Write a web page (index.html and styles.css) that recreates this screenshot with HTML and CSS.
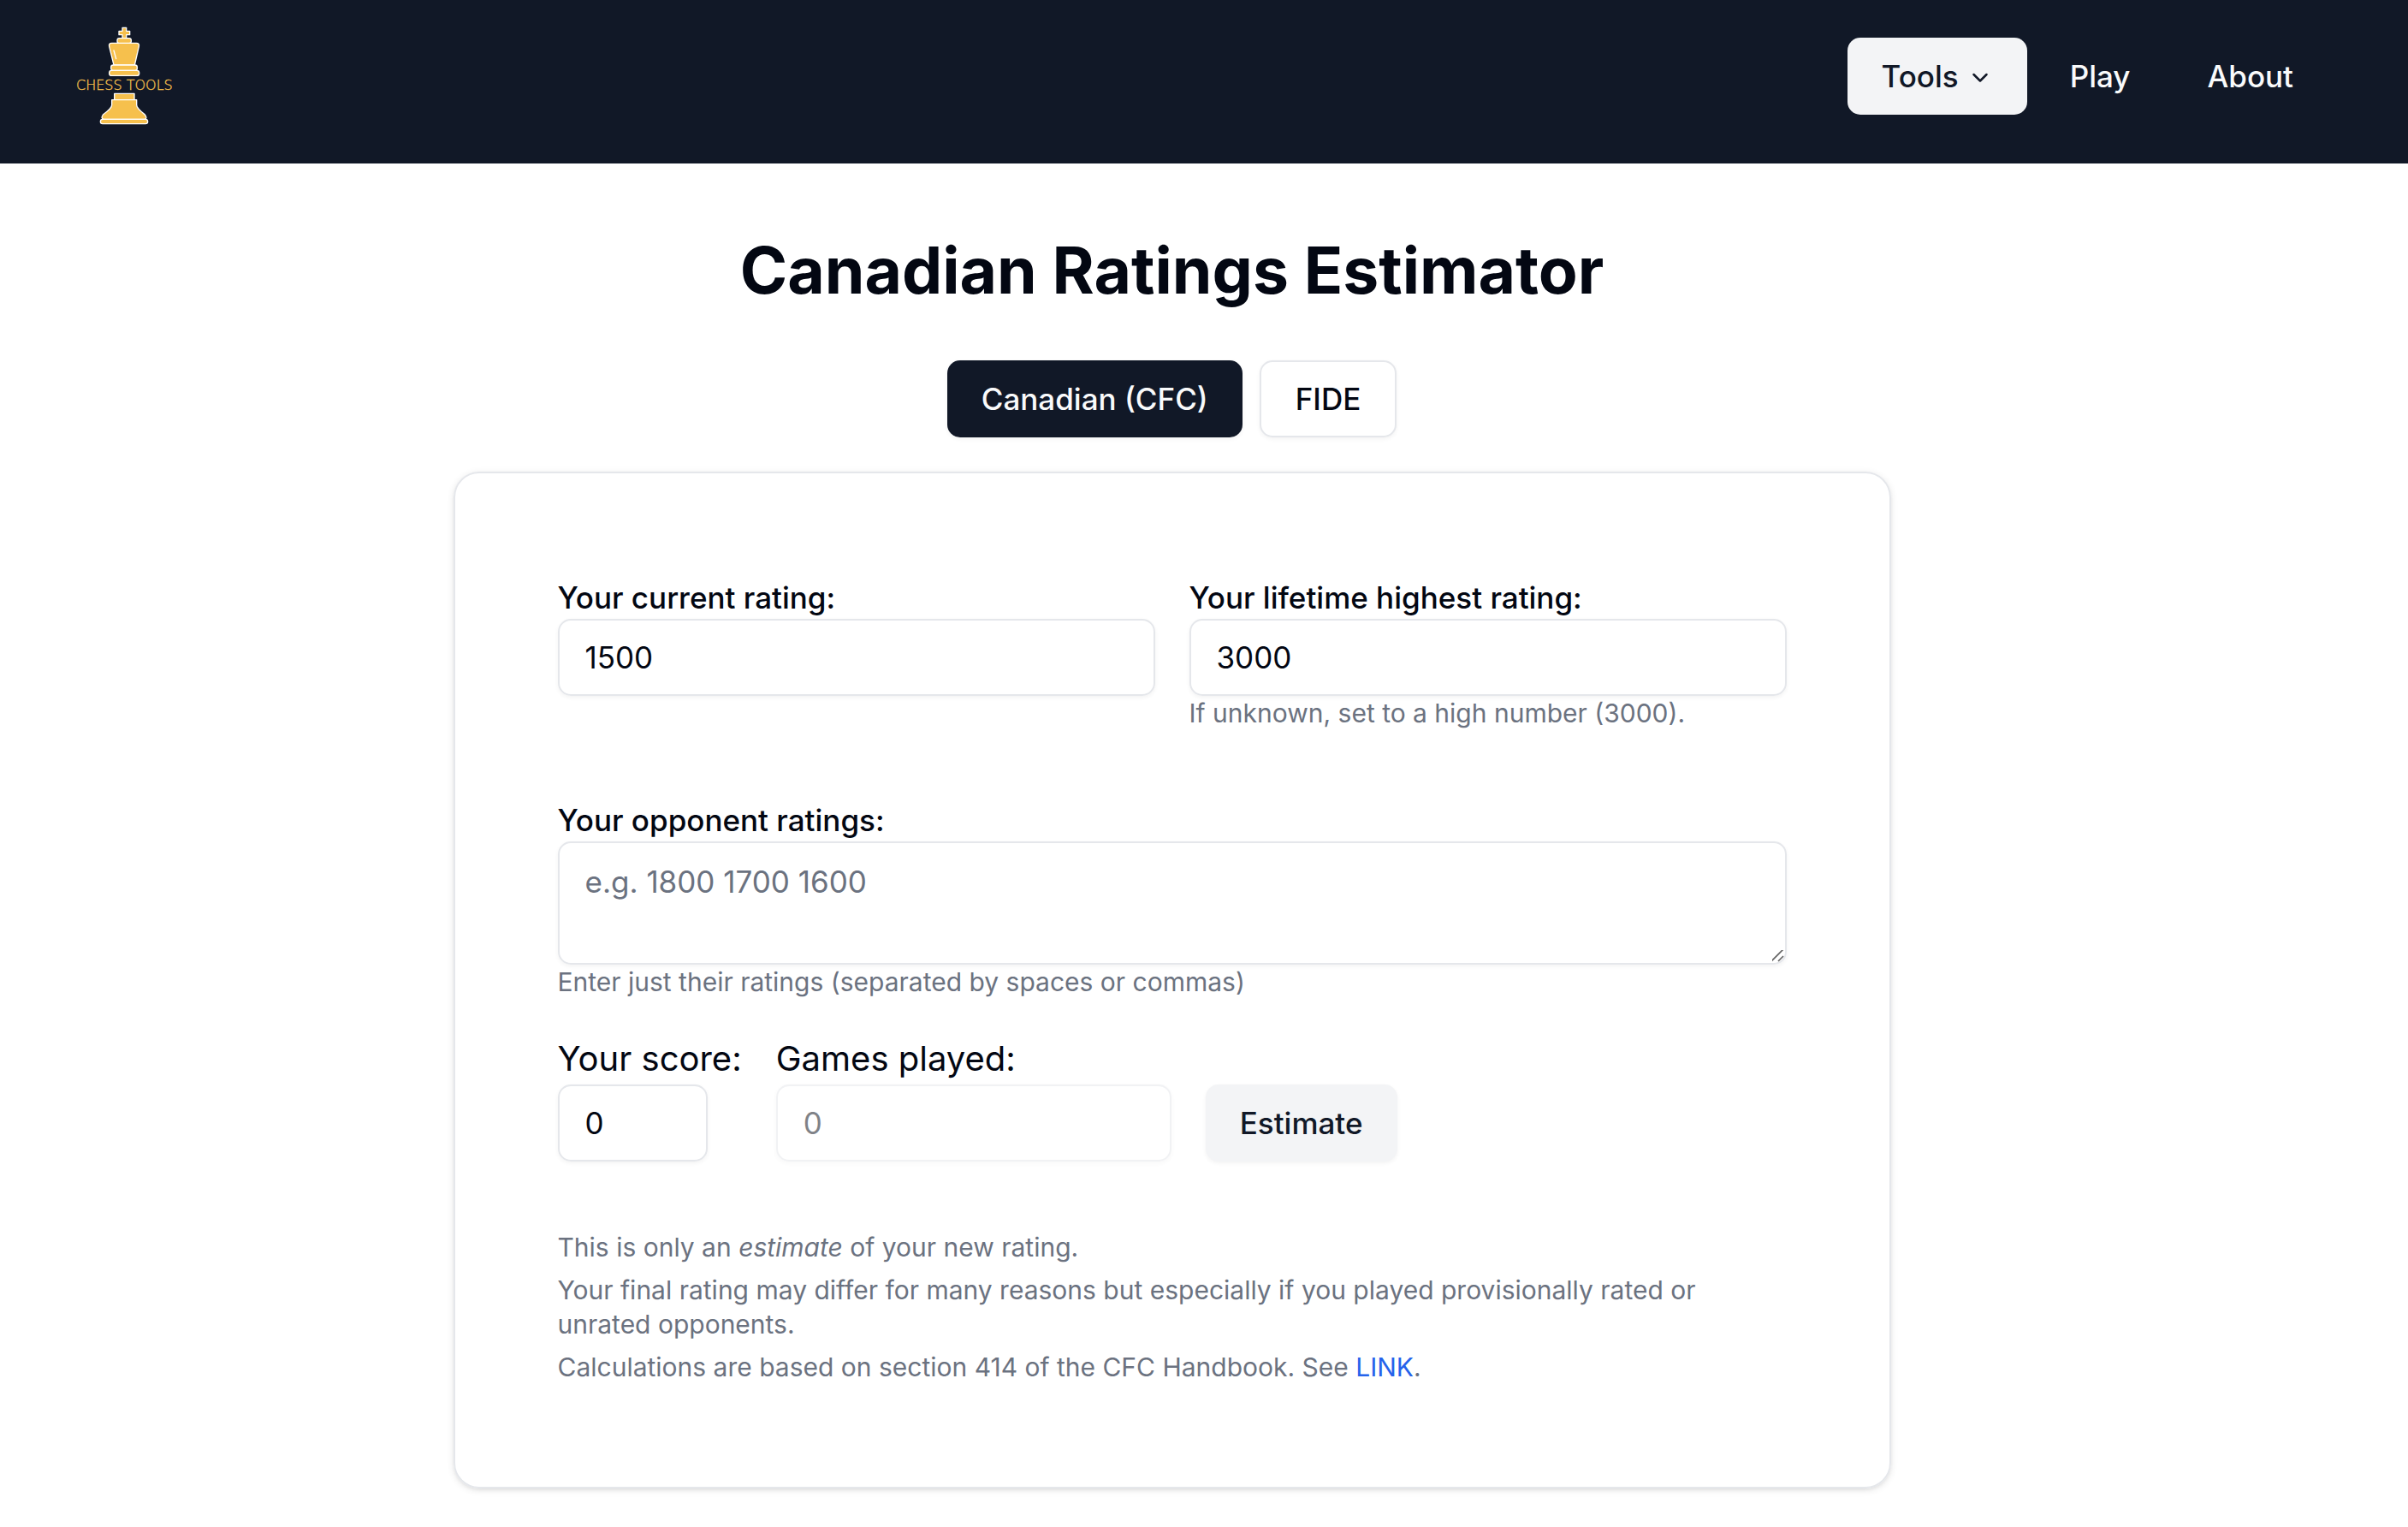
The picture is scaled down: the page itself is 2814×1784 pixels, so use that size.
FILE: index.html
```html
<!DOCTYPE html>
<html lang="en">
<head>
  <meta charset="utf-8">
  <meta name="viewport" content="width=device-width, initial-scale=1">
  <title>Canadian Ratings Estimator</title>
  <link rel="stylesheet" href="styles.css">
</head>
<body>
  <header class="header">
    <a class="logo" href="#" aria-label="Chess Tools home">
      <svg class="logo-mark" viewBox="60 42 390 390" role="img" aria-label="Chess Tools">
        <g class="logo-piece">
          <path d="M249 67h14v12h12v13h-12v13h-14V92h-12V79h12z"/>
          <rect x="231" y="104" width="49" height="18" rx="7"/>
          <path d="M212 121h86q12 0 9 12l-15 65h-73l-16-65q-3-12 9-12z"/>
          <rect x="209" y="198" width="92" height="19" rx="8"/>
          <rect x="203" y="217" width="105" height="18" rx="8"/>
          <path d="M221 298h70v22h-70z"/>
          <path d="M212 320h87v18c0 10 10 18 29 34q11 16-3 16H184q-12-2-3-16c21-16 31-24 31-34z"/>
          <rect x="172" y="388" width="166" height="16" rx="8"/>
        </g>
        <path class="logo-shine" d="M219 147l8 29"/>
        <text class="logo-text" x="256" y="285" text-anchor="middle">CHESS TOOLS</text>
      </svg>
    </a>
    <nav class="nav" aria-label="Main">
      <button class="nav-item nav-item-open" type="button" aria-haspopup="true">
        Tools
        <svg class="chevron" viewBox="0 0 24 24" aria-hidden="true"><path d="m6 10.4 6 6 6-6"/></svg>
      </button>
      <a class="nav-item" href="#">Play</a>
      <a class="nav-item" href="#">About</a>
    </nav>
  </header>

  <main class="main">
    <h1 class="title">Canadian Ratings Estimator</h1>
    <div class="tabs">
      <button class="button button-dark" type="button">Canadian (CFC)</button>
      <button class="button button-outline" type="button">FIDE</button>
    </div>

    <section class="card">
      <form class="form">
        <div class="columns">
          <div class="field">
            <label class="label" for="current">Your current rating:</label>
            <input class="input" id="current" type="number" value="1500">
          </div>
          <div class="field">
            <label class="label" for="highest">Your lifetime highest rating:</label>
            <input class="input" id="highest" type="number" value="3000">
            <p class="hint">If unknown, set to a high number (3000).</p>
          </div>
        </div>

        <div class="results">
          <div class="field">
            <label class="label" for="opponents">Your opponent ratings:</label>
            <textarea class="input textarea" id="opponents" placeholder="e.g. 1800 1700 1600"></textarea>
            <p class="hint">Enter just their ratings (separated by spaces or commas)</p>
          </div>
          <div class="score-row">
            <div class="field">
              <label class="label label-large" for="score">Your score:</label>
              <input class="input input-score" id="score" type="number" value="0">
            </div>
            <div class="field">
              <label class="label label-large" for="games">Games played:</label>
              <input class="input input-games" id="games" type="number" value="0" disabled>
            </div>
            <button class="button button-light" type="submit">Estimate</button>
          </div>
        </div>
      </form>

      <div class="notes">
        <p>This is only an <em>estimate</em> of your new rating.</p>
        <p>Your final rating may differ for many reasons but especially if you played provisionally rated or unrated opponents.</p>
        <p>Calculations are based on section 414 of the CFC Handbook. See <a class="link" href="#">LINK</a>.</p>
      </div>
    </section>
  </main>
</body>
</html>
```
FILE: styles.css
```css
:root {
  --ink: #030712;
  --navy: #111827;
  --muted: #6b7280;
  --line: #e5e7eb;
  --soft: #f3f4f6;
  --shadow-small: 0 2px 5px rgb(0 0 0 / 5%);
}

*,
*::before,
*::after {
  box-sizing: border-box;
}

body {
  margin: 0;
  background: #fff;
  color: var(--ink);
  font-family: Inter, "Liberation Sans", sans-serif;
  font-size: 40px;
  line-height: 60px;
}

h1,
p {
  margin: 0;
}

button,
input,
textarea {
  font: inherit;
  color: inherit;
}

.header {
  display: flex;
  align-items: center;
  justify-content: space-between;
  padding: 24px 94px 37px 80px;
  background: var(--navy);
}

.logo,
.logo-mark {
  display: block;
  width: 130px;
  height: 130px;
}

.logo-piece {
  fill: #f6c04d;
  stroke: #fff;
  stroke-width: 4;
  stroke-linejoin: round;
}

.logo-shine {
  fill: none;
  stroke: #fff;
  stroke-width: 4;
  stroke-linecap: round;
}

.logo-text {
  fill: #f6c04d;
  stroke: #f6c04d;
  stroke-width: 1;
  font-family: "DejaVu Sans", sans-serif;
  font-size: 48px;
  font-weight: 200;
}

.nav {
  display: flex;
  gap: 10px;
}

.nav-item {
  display: flex;
  align-items: center;
  gap: 10px;
  height: 90px;
  padding: 0 40px;
  border: 0;
  border-radius: 15px;
  background: transparent;
  color: #f9fafb;
  font-size: 35px;
  font-weight: 500;
  line-height: 50px;
  text-decoration: none;
}

.nav-item-open {
  background: var(--soft);
  color: var(--navy);
}

.chevron {
  width: 30px;
  height: 30px;
  fill: none;
  stroke: currentColor;
  stroke-width: 2;
  stroke-linecap: round;
  stroke-linejoin: round;
}

.main {
  display: flex;
  flex-direction: column;
  align-items: center;
  padding: 80px 75px 40px 0;
}

.title {
  font-size: 75px;
  font-weight: 700;
  line-height: 90px;
}

.tabs {
  display: flex;
  gap: 20px;
  margin: 60px 0 40px;
}

.button {
  height: 90px;
  padding: 0 40px;
  border: 0;
  border-radius: 15px;
  box-shadow: var(--shadow-small);
  font-size: 35px;
  font-weight: 500;
  line-height: 50px;
}

.button-dark {
  background: var(--navy);
  color: #f9fafb;
}

.button-outline {
  border: 2px solid var(--line);
  background: #fff;
}

.button-light {
  background: var(--soft);
  color: var(--navy);
}

.card {
  width: 100%;
  max-width: 1680px;
  padding: 120px;
  border: 2px solid var(--line);
  border-radius: 30px;
  box-shadow: 0 2px 8px rgb(0 0 0 / 10%), 0 2px 5px -2px rgb(0 0 0 / 10%);
}

.form {
  display: grid;
  gap: 80px;
}

.columns {
  display: grid;
  grid-template-columns: 1fr 1fr;
  gap: 40px;
}

.results {
  display: grid;
  gap: 40px;
}

.field {
  display: flex;
  flex-direction: column;
  align-items: flex-start;
}

.label {
  font-size: 35px;
  font-weight: 500;
  line-height: 50px;
}

.label-large {
  font-size: 40px;
  font-weight: 400;
  line-height: 60px;
}

.input {
  width: 100%;
  height: 90px;
  padding: 0 30px;
  border: 2px solid var(--line);
  border-radius: 15px;
  background: transparent;
  box-shadow: var(--shadow-small);
  font-size: 35px;
  line-height: 50px;
  appearance: textfield;
}

.input::-webkit-inner-spin-button {
  appearance: none;
  margin: 0;
}

.input::placeholder {
  color: var(--muted);
  opacity: 1;
}

.input:disabled {
  opacity: 0.5;
}

.textarea {
  display: block;
  height: 144px;
  padding: 20px 30px;
  resize: vertical;
}

.textarea::-webkit-scrollbar {
  width: 20px;
  height: 20px;
}

.textarea::-webkit-resizer {
  background: url("data:image/svg+xml,%3Csvg xmlns='http://www.w3.org/2000/svg' viewBox='0 0 18 18'%3E%3Cpath d='M2 16 16 2M10 16l6-6' fill='none' stroke='%23666' stroke-width='1.7'/%3E%3C/svg%3E") right bottom / 18px 18px no-repeat;
}

.input-score {
  width: 175px;
}

.input-games {
  width: 462px;
}

.hint {
  color: var(--muted);
  font-size: 30px;
  line-height: 40px;
}

.score-row {
  display: flex;
  align-items: flex-end;
  gap: 40px;
}

.notes {
  display: grid;
  gap: 10px;
  margin-top: 80px;
  color: var(--muted);
  font-size: 30px;
  line-height: 40px;
}

.link {
  color: #2563eb;
  text-decoration: none;
}
```
